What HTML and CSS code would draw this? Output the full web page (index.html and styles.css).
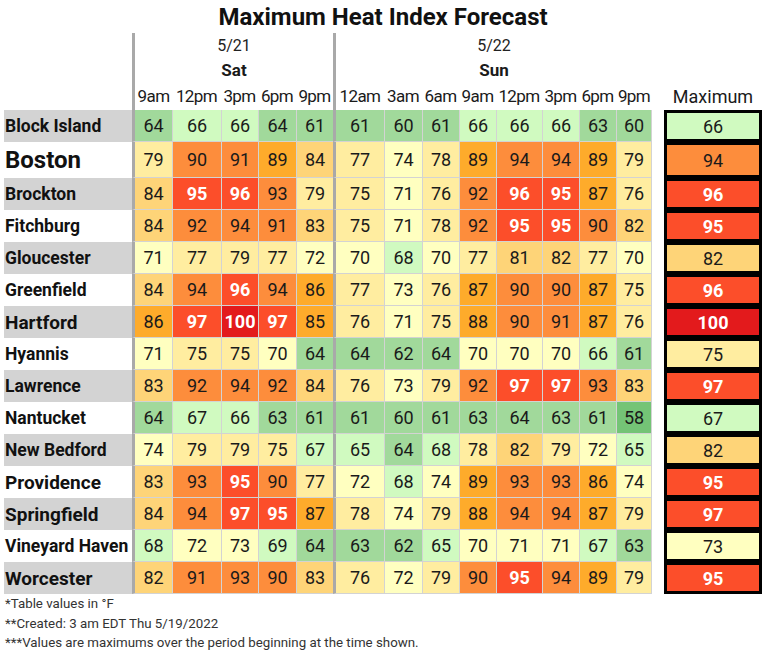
FILE: index.html
```html
<!DOCTYPE html>
<html lang="en">
<head>
<meta charset="utf-8">
<title>Maximum Heat Index Forecast</title>
<link rel="stylesheet" href="styles.css">
</head>
<body>
<div class="page">
  <h1 class="title">Maximum Heat Index Forecast</h1>
  <div class="head">
    <div class="corner"></div>
    <div class="day sat"><div class="date">5/21</div><div class="dow">Sat</div></div>
    <div class="day sun"><div class="date">5/22</div><div class="dow">Sun</div></div>
    <div class="time sep">9am</div><div class="time">12pm</div><div class="time">3pm</div><div class="time">6pm</div><div class="time">9pm</div>
    <div class="time sep">12am</div><div class="time">3am</div><div class="time">6am</div><div class="time">9am</div><div class="time">12pm</div><div class="time">3pm</div><div class="time">6pm</div><div class="time">9pm</div>
    <div class="time gap"></div><div class="time maxhead">Maximum</div>
  </div>

  <div class="row alt"><div class="name">Block Island</div><div class="c g2">64</div><div class="c g1">66</div><div class="c g1">66</div><div class="c g2">64</div><div class="c g2">61</div><div class="c g2">61</div><div class="c g2">60</div><div class="c g2">61</div><div class="c g1">66</div><div class="c g1">66</div><div class="c g1">66</div><div class="c g2">63</div><div class="c g2">60</div><div class="gap"></div><div class="max first"><div class="g1">66</div></div></div>
  <div class="row big"><div class="name xl">Boston</div><div class="c y1">79</div><div class="c o2">90</div><div class="c o2">91</div><div class="c o1">89</div><div class="c y2">84</div><div class="c y1">77</div><div class="c y0">74</div><div class="c y1">78</div><div class="c o1">89</div><div class="c o2">94</div><div class="c o2">94</div><div class="c o1">89</div><div class="c y1">79</div><div class="gap"></div><div class="max"><div class="o2">94</div></div></div>
  <div class="row alt"><div class="name">Brockton</div><div class="c y2">84</div><div class="c r1">95</div><div class="c r1">96</div><div class="c o2">93</div><div class="c y1">79</div><div class="c y1">75</div><div class="c y0">71</div><div class="c y1">76</div><div class="c o2">92</div><div class="c r1">96</div><div class="c r1">95</div><div class="c o1">87</div><div class="c y1">76</div><div class="gap"></div><div class="max"><div class="r1">96</div></div></div>
  <div class="row"><div class="name">Fitchburg</div><div class="c y2">84</div><div class="c o2">92</div><div class="c o2">94</div><div class="c o2">91</div><div class="c y2">83</div><div class="c y1">75</div><div class="c y0">71</div><div class="c y1">78</div><div class="c o2">92</div><div class="c r1">95</div><div class="c r1">95</div><div class="c o2">90</div><div class="c y2">82</div><div class="gap"></div><div class="max"><div class="r1">95</div></div></div>
  <div class="row alt"><div class="name">Gloucester</div><div class="c y0">71</div><div class="c y1">77</div><div class="c y1">79</div><div class="c y1">77</div><div class="c y0">72</div><div class="c y0">70</div><div class="c g1">68</div><div class="c y0">70</div><div class="c y1">77</div><div class="c y2">81</div><div class="c y2">82</div><div class="c y1">77</div><div class="c y0">70</div><div class="gap"></div><div class="max"><div class="y2">82</div></div></div>
  <div class="row"><div class="name">Greenfield</div><div class="c y2">84</div><div class="c o2">94</div><div class="c r1">96</div><div class="c o2">94</div><div class="c o1">86</div><div class="c y1">77</div><div class="c y0">73</div><div class="c y1">76</div><div class="c o1">87</div><div class="c o2">90</div><div class="c o2">90</div><div class="c o1">87</div><div class="c y1">75</div><div class="gap"></div><div class="max"><div class="r1">96</div></div></div>
  <div class="row alt"><div class="name lg">Hartford</div><div class="c o1">86</div><div class="c r1">97</div><div class="c r2">100</div><div class="c r1">97</div><div class="c o1">85</div><div class="c y1">76</div><div class="c y0">71</div><div class="c y1">75</div><div class="c o1">88</div><div class="c o2">90</div><div class="c o2">91</div><div class="c o1">87</div><div class="c y1">76</div><div class="gap"></div><div class="max"><div class="r2">100</div></div></div>
  <div class="row"><div class="name">Hyannis</div><div class="c y0">71</div><div class="c y1">75</div><div class="c y1">75</div><div class="c y0">70</div><div class="c g2">64</div><div class="c g2">64</div><div class="c g2">62</div><div class="c g2">64</div><div class="c y0">70</div><div class="c y0">70</div><div class="c y0">70</div><div class="c g1">66</div><div class="c g2">61</div><div class="gap"></div><div class="max"><div class="y1">75</div></div></div>
  <div class="row alt"><div class="name">Lawrence</div><div class="c y2">83</div><div class="c o2">92</div><div class="c o2">94</div><div class="c o2">92</div><div class="c y2">84</div><div class="c y1">76</div><div class="c y0">73</div><div class="c y1">79</div><div class="c o2">92</div><div class="c r1">97</div><div class="c r1">97</div><div class="c o2">93</div><div class="c y2">83</div><div class="gap"></div><div class="max"><div class="r1">97</div></div></div>
  <div class="row"><div class="name">Nantucket</div><div class="c g2">64</div><div class="c g1">67</div><div class="c g1">66</div><div class="c g2">63</div><div class="c g2">61</div><div class="c g2">61</div><div class="c g2">60</div><div class="c g2">61</div><div class="c g2">63</div><div class="c g2">64</div><div class="c g2">63</div><div class="c g2">61</div><div class="c g3">58</div><div class="gap"></div><div class="max"><div class="g1">67</div></div></div>
  <div class="row alt"><div class="name">New Bedford</div><div class="c y0">74</div><div class="c y1">79</div><div class="c y1">79</div><div class="c y1">75</div><div class="c g1">67</div><div class="c g1">65</div><div class="c g2">64</div><div class="c g1">68</div><div class="c y1">78</div><div class="c y2">82</div><div class="c y1">79</div><div class="c y0">72</div><div class="c g1">65</div><div class="gap"></div><div class="max"><div class="y2">82</div></div></div>
  <div class="row"><div class="name lg">Providence</div><div class="c y2">83</div><div class="c o2">93</div><div class="c r1">95</div><div class="c o2">90</div><div class="c y1">77</div><div class="c y0">72</div><div class="c g1">68</div><div class="c y0">74</div><div class="c o1">89</div><div class="c o2">93</div><div class="c o2">93</div><div class="c o1">86</div><div class="c y0">74</div><div class="gap"></div><div class="max"><div class="r1">95</div></div></div>
  <div class="row alt"><div class="name lg">Springfield</div><div class="c y2">84</div><div class="c o2">94</div><div class="c r1">97</div><div class="c r1">95</div><div class="c o1">87</div><div class="c y1">78</div><div class="c y0">74</div><div class="c y1">79</div><div class="c o1">88</div><div class="c o2">94</div><div class="c o2">94</div><div class="c o1">87</div><div class="c y1">79</div><div class="gap"></div><div class="max"><div class="r1">97</div></div></div>
  <div class="row"><div class="name">Vineyard Haven</div><div class="c g1">68</div><div class="c y0">72</div><div class="c y0">73</div><div class="c g1">69</div><div class="c g2">64</div><div class="c g2">63</div><div class="c g2">62</div><div class="c g1">65</div><div class="c y0">70</div><div class="c y0">71</div><div class="c y0">71</div><div class="c g1">67</div><div class="c g2">63</div><div class="gap"></div><div class="max"><div class="y0">73</div></div></div>
  <div class="row alt"><div class="name lg">Worcester</div><div class="c y2">82</div><div class="c o2">91</div><div class="c o2">93</div><div class="c o2">90</div><div class="c y2">83</div><div class="c y1">76</div><div class="c y0">72</div><div class="c y1">79</div><div class="c o2">90</div><div class="c r1">95</div><div class="c o2">94</div><div class="c o1">89</div><div class="c y1">79</div><div class="gap"></div><div class="max last"><div class="r1">95</div></div></div>

  <div class="notes">
    <p>*Table values in °F</p>
    <p>**Created: 3 am EDT Thu 5/19/2022</p>
    <p>***Values are maximums over the period beginning at the time shown.</p>
  </div>
</div>
</body>
</html>
```

FILE: styles.css
```css
* { box-sizing: border-box; }

:root {
  --cols: 128px 40px 49px 37px 38px 37px 51px 38px 37px 37px 46px 37px 37px 36px 12px 98px;
  --divider: #a9a9a9;
  --line: #d3d3d3;
}

body {
  margin: 0;
  background: #fff;
  color: #1a1a1a;
  font-family: Roboto, "Noto Sans", sans-serif;
}

.page {
  width: 771px;
  padding-left: 4px;
}

.title {
  margin: 0;
  width: 758px;
  height: 33px;
  padding-top: 1px;
  line-height: 33px;
  font-size: 24px;
  font-weight: 700;
  text-align: center;
  color: #111;
}

/* header */
.head {
  display: grid;
  grid-template-columns: var(--cols);
  grid-template-rows: 24px 26px 27px;
}

.corner {
  grid-column: 1;
  grid-row: 1 / 4;
}

.day {
  grid-row: 1 / 3;
  border-left: 3px solid var(--divider);
  display: grid;
  grid-template-rows: 24px 26px;
  text-align: center;
}

.sat { grid-column: 2 / 7; }
.sun { grid-column: 7 / 15; }

.date {
  font-size: 16px;
  line-height: 24px;
  padding-top: 1px;
  color: #222;
}

.dow {
  font-size: 17px;
  font-weight: 700;
  line-height: 26px;
}

.time {
  grid-row: 3;
  font-size: 17px;
  letter-spacing: -0.6px;
  line-height: 27px;
  text-align: center;
  white-space: nowrap;
  color: #1a1a1a;
}

.time.sep { border-left: 3px solid var(--divider); }

.maxhead {
  font-size: 18px;
  letter-spacing: 0;
}

/* data rows */
.row {
  display: grid;
  grid-template-columns: var(--cols);
  height: 32px;
}

.row.big { height: 36px; }

.name {
  display: flex;
  align-items: center;
  padding-left: 1px;
  font-size: 17.5px;
  font-weight: 700;
  white-space: nowrap;
  color: #111;
}

.name.lg { font-size: 19px; }
.name.xl { font-size: 24px; }

.row.alt .name { background: #d3d3d3; }

.c {
  display: flex;
  align-items: center;
  justify-content: center;
  border-left: 1px solid var(--line);
  border-bottom: 1px solid var(--line);
  font-size: 18px;
}

.row .c:nth-child(2),
.row .c:nth-child(7) { border-left: 3px solid var(--divider); }

.row .c:nth-child(14) { border-right: 1px solid var(--line); }

.max {
  background: #000;
  padding: 3px;
}

.max > div {
  height: 100%;
  display: flex;
  align-items: center;
  justify-content: center;
  font-size: 18px;
}

/* heat index colour scale */
.g3 { background: #74c476; }
.g2 { background: #a1d99b; }
.g1 { background: #d0fac0; }
.y0 { background: #ffffc0; }
.y1 { background: #ffeda0; }
.y2 { background: #fed478; }
.o1 { background: #feab2b; }
.o2 { background: #fd8d3c; }
.r1 { background: #fc4e2a; color: #fff; font-weight: 700; }
.r2 { background: #e31a1c; color: #fff; font-weight: 700; }

/* notes */
.notes {
  padding-left: 1px;
  font-size: 13.3px;
  line-height: 19.5px;
  color: #333;
}

.notes p { margin: 0; }
```
